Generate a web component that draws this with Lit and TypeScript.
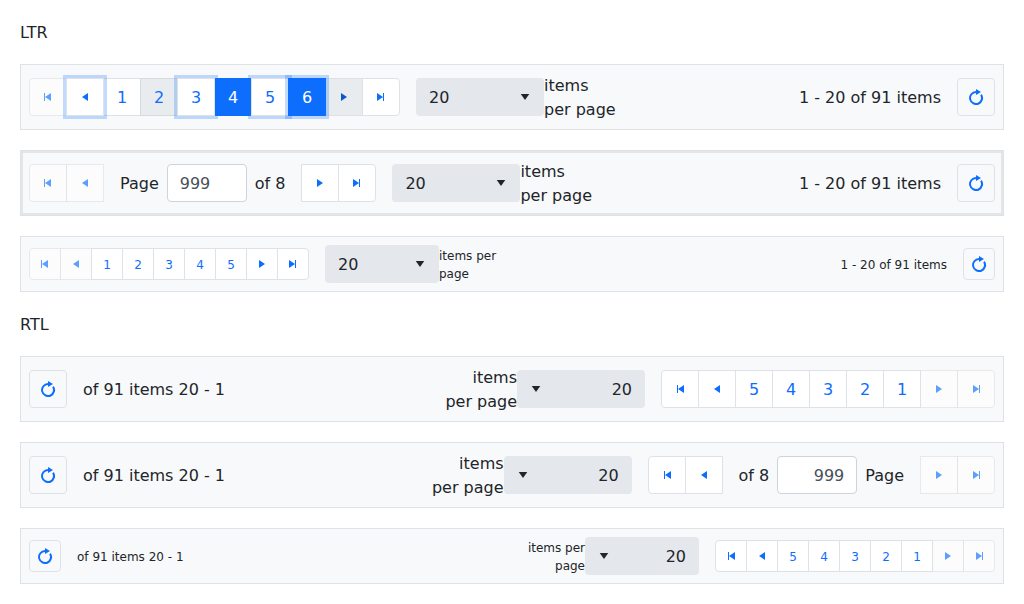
import { LitElement, html, css, svg } from "lit";
import { customElement, property } from "lit/decorators.js";
import { classMap } from "lit/directives/class-map.js";

const ICONS: Record<string, string> = {
  left: "M160 256 352 128v256z",
  right: "M352 256 160 384V128z",
  first: "M128 128h32v256h-32zM160 256 352 128v256z",
  last: "M320 128h32v256h-32zM320 256 128 384V128z",
  down: "M256 352 120 160h272z",
  reload:
    "M256 64V0l160 96-160 96v-64a160 160 0 1 0 136 76l48-48A224 224 0 1 1 256 64z",
};

@customElement("pager-icon")
export class PagerIcon extends LitElement {
  static styles = css`
    :host { display: inline-flex; width: 16px; height: 16px; flex: none; }
    .glyph { width: 16px; height: 16px; fill: currentColor; display: block; }
    .flip { transform: scaleX(-1); }
  `;
  @property() name = "left";
  @property({ type: Boolean }) flip = false;
  render() {
    return html`<svg class=${classMap({ glyph: true, flip: this.flip })} viewBox="0 0 512 512" aria-hidden="true">
      ${svg`<path d=${ICONS[this.name]}></path>`}
    </svg>`;
  }
}

@customElement("data-pager")
export class DataPager extends LitElement {
  static styles = css`
    :host { display: block; }
    .pager {
      box-sizing: border-box; display: flex; align-items: center; gap: 16px;
      padding: 8px; border: 1px solid #dee2e6; background: #f8f9fb;
      font-size: 16px; line-height: 24px; color: #212529;
    }
    .pager.focused { box-shadow: inset 0 0 0 2px rgba(0, 0, 0, 0.08); }
    .small { font-size: 12px; line-height: 18px; }
    .text { display: block; padding-top: 1px; margin-bottom: -1px; }
    .wrap { display: flex; align-items: center; gap: 16px; }
    .group { display: flex; isolation: isolate; }
    .btn {
      box-sizing: border-box; width: 38px; height: 38px; flex: none; padding: 0; margin: 0;
      display: flex; align-items: center; justify-content: center;
      border: 1px solid #dee2e6; background: #fff; color: #0d6efd;
      font: inherit; position: relative;
    }
    .small .btn { width: 32px; height: 32px; }
    .group .btn + .btn { margin-inline-start: -1px; }
    .start { border-start-start-radius: 4px; border-end-start-radius: 4px; }
    .end { border-start-end-radius: 4px; border-end-end-radius: 4px; }
    .disabled { opacity: 0.65; }
    .hover { background: #e9ecef; border-color: #d6dade; }
    .active { background: #e9ecef; color: #0a58ca; }
    .selected { background: #0d6efd; border-color: #0d6efd; color: #fff; z-index: 1; }
    .focus { box-shadow: 0 0 0 3px rgba(13, 110, 253, 0.25); z-index: 2; }
    .refresh { background: transparent; border-radius: 4px; }
    .goto { display: flex; align-items: center; gap: 8px; }
    .field {
      box-sizing: border-box; width: 80px; height: 38px; padding: 6px 12px;
      border: 1px solid #ced4da; border-radius: 4px; background: #fff; color: #495057;
      font: inherit; outline: none;
    }
    .sizes { display: flex; align-items: center; }
    .label { width: 74px; }
    .small .label { width: 60px; }
    .dropdown {
      box-sizing: border-box; width: 128px; height: 38px; padding-inline: 13px 11px;
      display: flex; align-items: center; justify-content: space-between;
      border-radius: 4px; background: #e4e7eb; font-size: 16px; line-height: 24px;
    }
    .small .dropdown { width: 114px; }
    .info { margin-inline-start: auto; }
  `;

  @property() dir = "ltr";
  @property({ type: Boolean }) small = false;
  @property({ type: Boolean }) input = false;
  @property({ type: Boolean }) focused = false;
  @property({ attribute: false }) pages: number[] = [1, 2, 3, 4, 5];
  @property({ attribute: false }) states: Record<string, string> = { first: "disabled", prev: "disabled" };

  private button(key: string, content: unknown, edge = "") {
    return html`<button class="btn ${edge} ${this.states[key] ?? ""}">${content}</button>`;
  }

  private nav(key: string, icon: string, edge = "") {
    return this.button(key, html`<pager-icon name=${icon} ?flip=${this.dir === "rtl"}></pager-icon>`, edge);
  }

  render() {
    const lead = html`${this.nav("first", "first", "start")}${this.nav("prev", "left")}`;
    const tail = html`${this.nav("next", "right")}${this.nav("last", "last", "end")}`;
    return html`
      <div class=${classMap({ pager: true, small: this.small, focused: this.focused })} dir=${this.dir}>
        ${this.input
          ? html`<div class="wrap">
              <div class="group">${lead}</div>
              <div class="goto">
                <span class="text">Page</span><input class="field" .value=${"999"} /><span class="text">of 8</span>
              </div>
              <div class="group">${tail}</div>
            </div>`
          : html`<div class="group">
              ${lead}${this.pages.map((p) => this.button(String(p), html`<span class="text">${p}</span>`))}${tail}
            </div>`}
        <div class="sizes">
          <div class="dropdown"><span class="text">20</span><pager-icon name="down"></pager-icon></div>
          <div class="label text">items per page</div>
        </div>
        <div class="info text">1 - 20 of 91 items</div>
        <button class="btn refresh"><pager-icon name="reload"></pager-icon></button>
      </div>`;
  }
}

@customElement("app-root")
export class AppRoot extends LitElement {
  static styles = css`
    :host {
      display: flex; flex-direction: column; gap: 20px; box-sizing: border-box;
      padding: 20px; min-height: 604px; background: #fff; color: #212529;
      font: 16px/24px "DejaVu Sans", sans-serif;
    }
    .heading { padding-top: 1px; margin-bottom: -1px; }
  `;
  private demo = {
    first: "disabled", prev: "focus", "2": "hover", "3": "focus",
    "4": "selected", "5": "focus", "6": "selected focus", next: "active",
  };
  render() {
    return html`
      <div class="heading">LTR</div>
      <data-pager .pages=${[1, 2, 3, 4, 5, 6]} .states=${this.demo}></data-pager>
      <data-pager input focused></data-pager>
      <data-pager small></data-pager>
      <div class="heading">RTL</div>
      <data-pager dir="rtl"></data-pager>
      <data-pager dir="rtl" input></data-pager>
      <data-pager dir="rtl" small></data-pager>
    `;
  }
}
